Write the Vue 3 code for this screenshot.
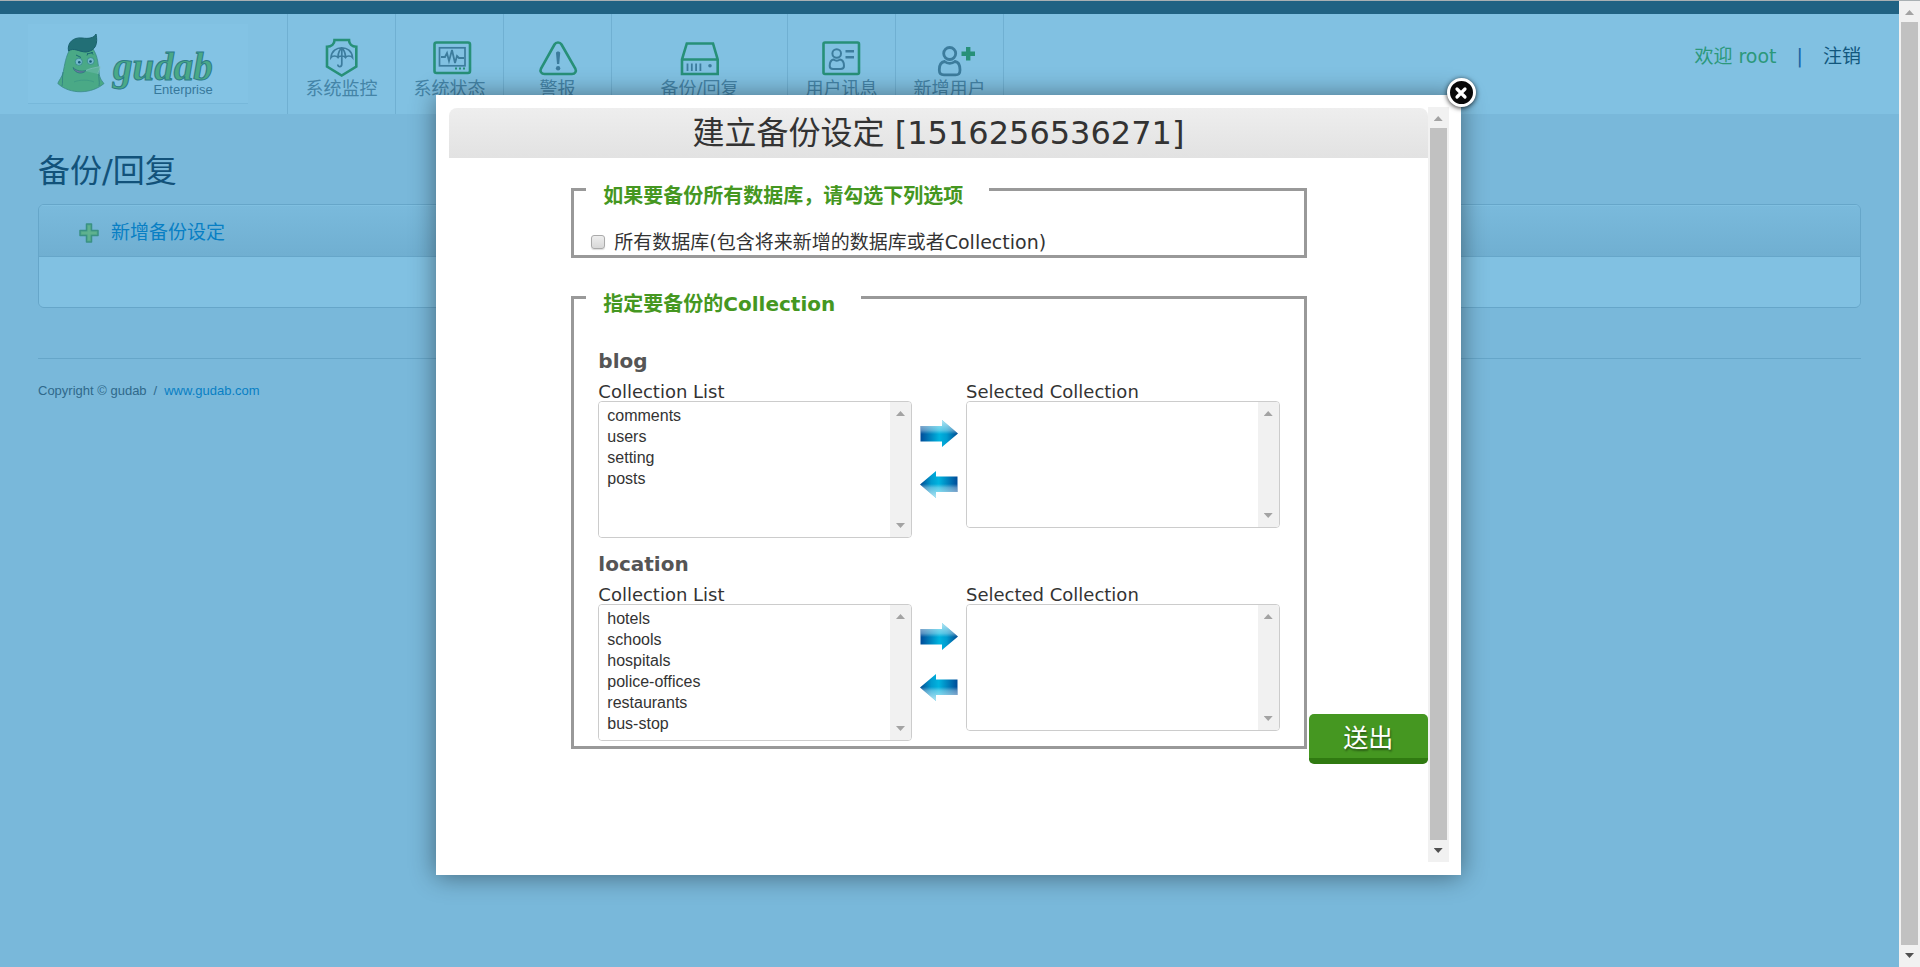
<script setup>
import { ref } from 'vue'

const groups = ref([
  { name: 'blog', available: ['comments', 'users', 'setting', 'posts'], selected: [] },
  {
    name: 'location',
    available: ['hotels', 'schools', 'hospitals', 'police-offices', 'restaurants', 'bus-stop'],
    selected: []
  }
])
const allDatabases = ref(false)
</script>

<template>
  <div class="screen">
    <div class="page">
      <div class="strip"></div>
      <header class="header">
        <a class="logo" href="#">
          <svg class="mascot" width="48" height="60" viewBox="0 0 48 60" aria-hidden="true">
            <path d="M12 17C8 25 7 35 6 39C5 43 2 46 .8 49.500C13 61 35 60 47 49.500C44 46 42 43 41.800 36C41 27 40 21 36 15C29 10 18 10 12 17Z" fill="#4aa986" stroke="#3a8a88" stroke-width=".8" />
            <path d="M6 38C5 44 6 49 5 52M42 35C41 43 43 48 42 52" fill="none" stroke="#2e7f83" stroke-width=".8" />
            <path d="M17 48C22 45.500 32 45.500 37 48" fill="none" stroke="#3b9884" stroke-width=".8" />
            <path d="M28 37C33 34 38 34 43 32.500C43 36 41 38 41 40" fill="#5cb39a" stroke="#7cbcbd" stroke-width=".8" />
            <path d="M11.500 17C10 9 16 3 25 4C32 5 37 4 39 0C41 9 39 17 29 18C22 18 17 13 11.500 17Z" fill="#226f76" stroke="#19616e" />
            <circle cx="21.800" cy="27.800" r="3.600" fill="#73b8cc" stroke="#328a86" stroke-width=".8" />
            <circle cx="33.700" cy="27" r="3.500" fill="#73b8cc" stroke="#328a86" stroke-width=".8" />
            <circle cx="22.300" cy="28.300" r="1.300" fill="#155b77" /><circle cx="33.500" cy="27.500" r="1.300" fill="#155b77" />
            <path d="M19 21L24 23.500M30 20L36 18.500M31 19L30 21.500M34 18L36 20.500" stroke="#1c6a75" />
            <path d="M16 33.500C18 40 26 40.500 29 36.500C25 37.500 20 37.500 16 33.500Z" fill="#6d78a0" stroke="#26777c" stroke-width=".8" />
          </svg>
          <span class="wordmark">
            <span class="brand">gudab</span>
            <span class="edition">Enterprise</span>
          </span>
        </a>

        <nav class="nav">
          <a href="#">
            <svg width="48" height="40" viewBox="1 0 48 40" fill="none" stroke="#279078" stroke-width="2.600" aria-hidden="true">
              <path d="M17.500 2H32C32 6 35 8.700 39.300 8.700V28.500L24.700 37.500L10 28.500V8.700C14.500 8.700 17.500 6 17.500 2Z" />
              <path d="M14 19.500C15 6.500 34.500 6.500 35.500 19.500C34 17.500 29.500 17.500 28.500 19.500C27 17.500 22 17.500 21 19.500C19.500 17.500 15.500 17.500 14 19.500ZM21 19C21 15 23 11 24.800 10C26.500 11 28.500 15 28.500 19M24.800 10V26C24.800 29.500 20.800 29.500 20.800 26.500" stroke="#3c7c9d" stroke-width="1.700" />
            </svg>
            系统监控
          </a>
          <a href="#">
            <svg width="48" height="40" viewBox="1 0 48 40" fill="none" aria-hidden="true">
              <rect x="9.500" y="4.500" width="35.500" height="30.500" rx="2" stroke="#279078" stroke-width="2.600" />
              <rect x="14.500" y="9.800" width="25.500" height="18" stroke="#3c7c9d" stroke-width="1.700" />
              <path d="M16 19H20L22 15L24 23L27 12L30 25L32 18L34 20H39" stroke="#3c7c9d" stroke-width="1.800" />
              <path d="M30 30.500H32M34 30.500H36M38 30.500H40" stroke="#279078" stroke-width="2" />
            </svg>
            系统状态
          </a>
          <a href="#">
            <svg width="48" height="40" viewBox="1 0 48 40" aria-hidden="true">
              <path d="M21.500 6.500C23 3.800 27 3.800 28.500 6.500L42.300 30.500C43.800 33.500 42 36 39 36H11.500C8.500 36 6.500 33.500 8 30.500Z" fill="none" stroke="#279078" stroke-width="2.600" />
              <path d="M23 15C23 13 27.200 13 27.200 15L26.200 26H24Z" fill="#3c7c9d" />
              <circle cx="25.100" cy="30.300" r="2.200" fill="#3c7c9d" />
            </svg>
            警报
          </a>
          <a class="wide" href="#">
            <svg width="48" height="40" viewBox="1 0 48 40" fill="none" aria-hidden="true">
              <path d="M7 36V21.500L11.800 5.500H38L42.700 21.500V36ZM7 21.500H42.700" stroke="#279078" stroke-width="2.600" />
              <path d="M12.500 25.500V33M16.800 25.500V33M21.100 25.500V33M25.400 25.500V33" stroke="#3c7c9d" stroke-width="1.800" />
              <circle cx="35" cy="27.700" r="1.800" fill="#3c7c9d" />
            </svg>
            备份/回复
          </a>
          <a href="#">
            <svg width="48" height="40" viewBox="1 0 48 40" fill="none" aria-hidden="true">
              <rect x="6.500" y="4.500" width="35.500" height="31.500" rx="1.500" stroke="#279078" stroke-width="2.600" />
              <g stroke="#3c7c9d" stroke-width="2">
                <circle cx="19.700" cy="15.500" r="4.300" />
                <path d="M16.500 21.500C13.500 22 12.700 24.500 12.700 28C12.700 30.500 14 31 16 31H23.500C26 31 27 30.500 27 28C27 24.500 26 22 23 21.500C21 23 18.500 23 16.500 21.500Z" />
                <path d="M28.500 13.300H37M28.500 19.300H37" stroke-width="2.400" />
              </g>
            </svg>
            用户讯息
          </a>
          <a href="#">
            <svg width="48" height="40" viewBox="1 0 48 40" fill="none" aria-hidden="true">
              <g stroke="#3c7c9d" stroke-width="2.800">
                <circle cx="24.700" cy="15.500" r="6" />
                <path d="M19.500 23.500C15.500 24 14.300 27 14.300 32C14.300 36 16 36.800 19 36.800H30.500C33.500 36.800 35 36 35 32C35 27 34 24 30 23.500C27 25.800 22.500 25.800 19.500 23.500Z" />
              </g>
              <path d="M43.200 9V22.500M36.500 15.700H50" stroke="#279078" stroke-width="4.400" />
            </svg>
            新增用户
          </a>
        </nav>

        <div class="account">
          <span class="welcome">欢迎 root</span>
          <span class="divider">|</span>
          <a href="#">注销</a>
        </div>
      </header>

      <main class="content">
        <h1>备份/回复</h1>
        <section class="panel">
          <div class="panel-head">
            <a href="#">
              <svg width="20" height="20" viewBox="0 0 20 20" aria-hidden="true">
                <path d="M7.500 1H12.500V7.500H19V12.500H12.500V19H7.500V12.500H1V7.500H7.500Z" fill="#57ad8b" stroke="#3a9183" stroke-width="1.500" stroke-linejoin="round" />
                <path d="M10 3V17M3 10H17" stroke="#62b391" stroke-width="1.500" />
              </svg>
              新增备份设定
            </a>
          </div>
          <div class="panel-body"></div>
        </section>
        <footer class="footer">
          <span>Copyright © gudab</span><span>/</span><a href="#">www.gudab.com</a>
        </footer>
      </main>
    </div>

    <div class="bar page-bar" aria-hidden="true">
      <i class="up"></i><i class="thumb"></i><i class="down dark"></i>
    </div>

    <div class="overlay">
      <div class="dialog" role="dialog" aria-labelledby="dialog-title">
        <button class="close" type="button" aria-label="关闭">
          <svg width="12" height="12" viewBox="0 0 12 12"><path d="M2 2L10 10M10 2L2 10" stroke="#fff" stroke-width="3.200" stroke-linecap="round" /></svg>
        </button>
        <div class="dialog-content">
          <h2 id="dialog-title">建立备份设定 [1516256536271]</h2>
          <form class="form" @submit.prevent>
            <fieldset class="all">
              <legend>如果要备份所有数据库，请勾选下列选项</legend>
              <label class="check">
                <input v-model="allDatabases" type="checkbox" />
                <span>所有数据库(包含将来新增的数据库或者Collection)</span>
              </label>
            </fieldset>

            <fieldset class="pick">
              <legend>指定要备份的Collection</legend>
              <section v-for="group in groups" :key="group.name" class="group">
                <h3>{{ group.name }}</h3>
                <div class="transfer">
                  <div class="side">
                    <label :for="group.name + '-list'">Collection List</label>
                    <div class="listbox">
                      <select :id="group.name + '-list'" multiple>
                        <option v-for="item in group.available" :key="item">{{ item }}</option>
                      </select>
                      <div class="bar" aria-hidden="true"><i class="up"></i><i class="down"></i></div>
                    </div>
                  </div>
                  <div class="moves">
                    <button v-for="way in ['add', 'remove']" :key="way" type="button" :class="way" :aria-label="way">
                      <svg width="38" height="28" viewBox="0 0 38 28">
                        <defs>
                          <linearGradient :id="group.name + way + 'a'">
                            <stop offset="0" stop-color="#004b98" /><stop offset=".5" stop-color="#00b4df" />
                            <stop offset=".7" stop-color="#009bcf" /><stop offset="1" stop-color="#00488f" />
                          </linearGradient>
                          <linearGradient :id="group.name + way + 'b'" x2="0" y2="1">
                            <stop offset="0" stop-color="#fff" stop-opacity=".7" /><stop offset=".38" stop-color="#fff" stop-opacity=".35" />
                            <stop offset=".52" stop-color="#fff" stop-opacity="0" />
                          </linearGradient>
                        </defs>
                        <path d="M.5 6H22V0L38 13.500L22 27V21.500H.5Z" :fill="`url(#${group.name + way}a)`" />
                        <path d="M.5 6H22V0L38 13.500L22 27V21.500H.5Z" :fill="`url(#${group.name + way}b)`" />
                      </svg>
                    </button>
                  </div>
                  <div class="side">
                    <label :for="group.name + '-selected'">Selected Collection</label>
                    <div class="listbox short">
                      <select :id="group.name + '-selected'" multiple>
                        <option v-for="item in group.selected" :key="item">{{ item }}</option>
                      </select>
                      <div class="bar" aria-hidden="true"><i class="up"></i><i class="down"></i></div>
                    </div>
                  </div>
                </div>
              </section>
            </fieldset>
            <button class="submit" type="submit">送出</button>
          </form>
        </div>
        <div class="bar dialog-bar" aria-hidden="true">
          <i class="up"></i><i class="thumb"></i><i class="down dark"></i>
        </div>
      </div>
    </div>
  </div>
</template>

<style>
body {
  margin: 0;
  background: #79b8da;
}
</style>

<style scoped>
* {
  box-sizing: border-box;
}

.screen {
  position: relative;
  display: flex;
  min-height: 100vh;
  border-top: 1px solid #a9b0b3;
  font-family: "DejaVu Sans", "Noto Sans CJK SC", sans-serif;
  font-size: 18px;
  color: #333;
}

a {
  text-decoration: none;
}

button {
  padding: 0;
  border: 0;
  background: none;
  font-family: inherit;
  cursor: pointer;
}

svg {
  overflow: visible;
}

.page {
  flex: 1;
  min-width: 0;
}

.strip {
  height: 13px;
  background: #206283;
}

.header {
  display: flex;
  height: 100px;
  padding: 0 38px 0 28px;
  background: #81c1e2;
}

.logo {
  display: flex;
  align-items: center;
  gap: 8px;
  width: 220px;
  height: 80px;
  margin: 10px 39px 0 0;
  padding-left: 29px;
  border-bottom: 1px solid #77b8da;
  background: #83c3e4;
}

.wordmark {
  display: flex;
  flex-direction: column;
  align-items: flex-end;
  padding-top: 20px;
}

.brand {
  font: italic bold 39px/32px "Liberation Serif", serif;
  color: #4aa986;
  -webkit-text-stroke: 1px #2b7b86;
}

.edition {
  font: 13px/14px "Liberation Sans", sans-serif;
  color: #37789b;
}

.nav {
  display: flex;
  border-left: 1px solid #70b0d2;
}

.nav a {
  display: flex;
  flex-direction: column;
  align-items: center;
  min-width: 108px;
  padding-top: 24px;
  border-right: 1px solid #70b0d2;
  line-height: 22px;
  color: #4484a7;
}

.nav .wide {
  min-width: 176px;
}

.account {
  display: flex;
  gap: 20px;
  margin-left: auto;
  padding-top: 30px;
  font-size: 19px;
  line-height: 24px;
  color: #1763a4;
}

.welcome {
  color: #2c987b;
}

.account a {
  color: #12577d;
}

.content {
  padding: 33px 38px;
}

h1 {
  margin: 0;
  font-size: 32px;
  line-height: 48px;
  font-weight: 400;
  color: #12527a;
}

.panel {
  margin-top: 9px;
  border: 1px solid #66a6c9;
  border-radius: 6px;
  overflow: hidden;
}

.panel-head {
  display: flex;
  padding: 15px 40px 11px;
  border-bottom: 1px solid #66a6c9;
  background: linear-gradient(#7abadc, #70afd1);
  box-shadow: inset 0 1px #80c0e1;
}

.panel-head a {
  display: flex;
  align-items: center;
  gap: 12px;
  font-size: 19px;
  line-height: 25px;
  color: #087fc4;
}

.panel-body {
  height: 50px;
  background: #81c1e2;
}

.footer {
  display: flex;
  gap: 7px;
  margin-top: 50px;
  padding-top: 24px;
  border-top: 1px solid #66a6c9;
  font: 13px/16px "Liberation Sans", sans-serif;
  color: #30698b;
}

.footer a {
  color: #087fc4;
}

.bar {
  display: flex;
  flex-direction: column;
  align-items: center;
  flex: none;
  width: 21px;
  background: #f1f1f1;
}

.bar .up,
.bar .down {
  width: 9px;
  height: 5px;
  margin: 9px 0 7px;
  background: #a3a3a3;
  clip-path: polygon(50% 0, 100% 100%, 0 100%);
}

.bar .down {
  margin: auto 0 9px;
  clip-path: polygon(0 0, 100% 0, 50% 100%);
}

.bar .dark {
  margin-top: 8px;
  background: #505050;
}

.bar .thumb {
  flex: 1;
  width: 17px;
  background: #c1c1c1;
}

.overlay {
  position: absolute;
  inset: 94px 23px auto 0;
  display: flex;
  justify-content: center;
}

.dialog {
  position: relative;
  display: flex;
  width: 54%;
  min-width: 1000px;
  min-height: 780px;
  padding: 12px 12px 13px 13px;
  background: #fff;
  box-shadow: 0 1px 24px rgba(0, 0, 0, 0.45);
}

.close {
  position: absolute;
  top: -17px;
  right: -15px;
  display: grid;
  place-items: center;
  width: 29px;
  height: 29px;
  border: 3px solid #fff;
  border-radius: 50%;
  background: #080808;
  box-shadow: 0 1px 5px rgba(0, 0, 0, 0.8);
}

.dialog-content {
  flex: 1;
  min-width: 0;
}

h2 {
  margin: 1px 0 13px;
  border-radius: 8px 8px 0 0;
  background: linear-gradient(#eee, #e2e2e2);
  font-size: 32px;
  line-height: 50px;
  font-weight: 400;
  text-align: center;
}

.form {
  display: grid;
  grid-template-columns: 122px 1fr 121px;
}

fieldset {
  grid-column: 2;
  min-width: 0;
  margin: 0 0 21px;
  padding: 0 12px 1px;
  border: 3px solid #999;
}

.pick {
  margin-bottom: 15px;
  padding-bottom: 5px;
}

legend {
  padding: 13px 26px 0 17px;
  font-size: 20px;
  line-height: 24px;
  font-weight: 700;
  color: #459721;
}

.check {
  display: flex;
  align-items: center;
  gap: 9px;
  padding: 22px 0 0 5px;
  font-size: 19px;
  line-height: 24px;
}

.check input {
  appearance: none;
  width: 14px;
  height: 14px;
  margin: 0;
  border: 1px solid #aaa;
  border-radius: 3px;
  background: linear-gradient(#eee, #d8d8d8);
  box-shadow: 0 1px 1px #ddd;
}

.group {
  padding: 33px 12px 0;
}

.group + .group {
  padding-top: 14px;
}

h3 {
  margin: 0 0 10px;
  font-size: 20px;
  line-height: 24px;
  color: #555;
}

.transfer {
  display: grid;
  grid-template-columns: 1fr 38px 1fr;
  align-items: start;
  gap: 8px;
}

.side label {
  display: block;
  line-height: 18px;
}

.listbox {
  display: flex;
  height: 137px;
  border: 1px solid #ccc;
  border-radius: 4px;
  overflow: hidden;
}

.short {
  height: 127px;
}

.listbox select {
  flex: 1;
  min-width: 0;
  padding: 5px 6px;
  border: 0;
  outline: 0;
  background: #fff;
  font: 16px "Liberation Sans", sans-serif;
  color: #333;
  overflow: hidden;
}

.listbox option {
  height: 21px;
  padding: 0 2px;
  line-height: 21px;
}

.moves {
  display: grid;
  gap: 22px;
  padding-top: 37px;
}

.moves button,
.moves svg {
  display: block;
  height: 28px;
}

.remove svg {
  transform: rotate(180deg);
}

.submit {
  grid-column: 3;
  align-self: end;
  justify-self: end;
  width: 119px;
  height: 50px;
  padding-top: 6px;
  border-bottom: 6px solid #307a11;
  border-radius: 5px;
  background: #459721;
  font-size: 25px;
  line-height: 38px;
  color: #fff;
  text-shadow: 1px 2px 2px rgba(0, 0, 0, 0.4);
}
</style>
